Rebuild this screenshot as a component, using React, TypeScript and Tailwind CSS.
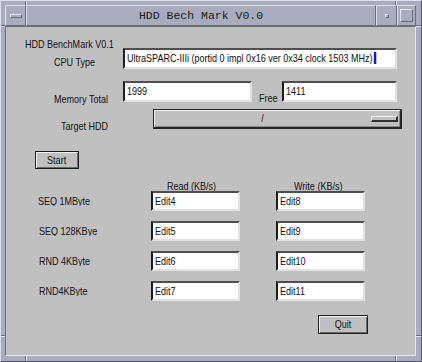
import React from "react";

const ui =
  "font-['Liberation_Sans',Arial,sans-serif] text-[11px] leading-[13px] text-[#111111]";

function N({ children, center }: { children: React.ReactNode; center?: boolean }) {
  return (
    <span
      className={`inline-block whitespace-nowrap scale-x-[0.82] ${center ? "origin-center" : "origin-left"}`}
    >
      {children}
    </span>
  );
}

function Field({ w, text, caret }: { w: string; text: string; caret?: boolean }) {
  return (
    <div
      className={`${w} shrink-0 h-full bg-white border-t-2 border-l-2 border-r-2 border-b-2 border-t-[#4e4e4e] border-l-[#1c1c1c] border-r-[#e2e2e2] border-b-[#e2e2e2] flex items-center pl-[2px] overflow-hidden`}
    >
      <N>
        {text}
        {caret && <span className="inline-block align-[-2px] w-[2.5px] h-[12px] bg-[#1818c8] ml-[2px]" />}
      </N>
    </div>
  );
}

function Btn({ label, cls }: { label: string; cls: string }) {
  return (
    <div
      className={`${cls} border border-[#1e1e1e] shadow-[inset_1px_1px_0_#f2f2f2,inset_-1px_-1px_0_#6a6a6a] flex items-center justify-center`}
    >
      <N center>{label}</N>
    </div>
  );
}

function Mark({ cls }: { cls: string }) {
  return <div className={`absolute ${cls}`} />;
}

export default function App() {
  return (
    <div className="relative w-[422px] h-[362px] bg-[#a9acbf] border border-t-[#dcdee8] border-l-[#dcdee8] border-r-[#55586b] border-b-[#55586b] pl-[4px] pr-[5px] pt-[4px] pb-[5px] flex flex-col">
      {/* title bar */}
      <div className="h-[21px] flex shrink-0">
        <div className="w-[21px] border border-t-[#dcdee8] border-l-[#dcdee8] border-r-[#6b6e82] border-b-[#6b6e82] flex items-center justify-center">
          <div className="w-[12px] h-[4px] border border-t-[#e6e7ef] border-l-[#e6e7ef] border-r-[#6b6e82] border-b-[#6b6e82]" />
        </div>
        <div className="flex-1 border border-t-[#dcdee8] border-l-[#dcdee8] border-r-[#6b6e82] border-b-[#6b6e82] flex items-center justify-center font-['Liberation_Mono',monospace] text-[11.5px] text-[#1a1a1a]">
          HDD Bech Mark V0.0
        </div>
        <div className="w-[21px] border border-t-[#dcdee8] border-l-[#dcdee8] border-r-[#6b6e82] border-b-[#6b6e82] flex items-center justify-center">
          <div className="w-[4px] h-[4px] border border-t-[#e6e7ef] border-l-[#e6e7ef] border-r-[#6b6e82] border-b-[#6b6e82]" />
        </div>
        <div className="w-[19px] border border-t-[#dcdee8] border-l-[#dcdee8] border-r-[#6b6e82] border-b-[#6b6e82] flex items-center justify-center">
          <div className="w-[13px] h-[13px] border border-t-[#e6e7ef] border-l-[#e6e7ef] border-r-[#6b6e82] border-b-[#6b6e82]" />
        </div>
      </div>

      {/* content */}
      <div className={`h-[330px] shrink-0 bg-[#c0c0c0] border border-t-[#6b6e80] border-l-[#6b6e80] border-r-[#e6e7ee] border-b-[#e6e7ee] flex flex-col ${ui}`}>
        <div className="mt-[11px] h-[10px] pl-[19px]">
          <N>HDD BenchMark V0.1</N>
        </div>

        <div className="h-[21px] flex">
          <div className="w-[117px] shrink-0 pl-[48px] pt-[8px]"><N>CPU Type</N></div>
          <Field w="w-[274px]" text="UltraSPARC-IIIi (portid 0 impl 0x16 ver 0x34 clock 1503 MHz)" caret />
        </div>

        <div className="mt-[12px] h-[21px] flex">
          <div className="w-[117px] shrink-0 pl-[48px] pt-[12px]"><N>Memory Total</N></div>
          <Field w="w-[129px]" text="1999" />
          <div className="w-[30px] shrink-0 pl-[7px] pt-[11px]"><N>Free</N></div>
          <Field w="w-[115px]" text="1411" />
        </div>

        <div className="mt-[7px] h-[20px] flex">
          <div className="w-[147px] shrink-0 pl-[55px] pt-[11px]"><N>Target HDD</N></div>
          <div className="w-[249px] shrink-0 h-full border border-[#262626] border-r-2 border-b-2 shadow-[inset_1px_1px_0_#f2f2f2,inset_-1px_-1px_0_#8a8a8a] flex items-center">
            <div className="flex-1 text-center"><N center>/</N></div>
            <div className="w-[27px] h-[6px] mr-[2px] border border-t-[#f4f4f4] border-l-[#f4f4f4] border-r-[#303030] border-b-[#303030] border-r-2 border-b-2" />
          </div>
        </div>

        <div className="mt-[22px] ml-[29px]">
          <Btn label="Start" cls="w-[44px] h-[18px]" />
        </div>

        <div className="mt-[11px] h-[11px] overflow-hidden flex pl-[161px]">
          <div className="w-[127px] shrink-0"><N>Read (KB/s)</N></div>
          <div><N>Write (KB/s)</N></div>
        </div>

        {[
          ["SEQ 1MByte", "Edit4", "Edit8", "pl-[32px]", ""],
          ["SEQ 128KBye", "Edit5", "Edit9", "pl-[33px]", "mt-[10px]"],
          ["RND 4KByte", "Edit6", "Edit10", "pl-[33px]", "mt-[10px]"],
          ["RND4KByte", "Edit7", "Edit11", "pl-[33px]", "mt-[10px]"],
        ].map(([label, a, b, pl, mt]) => (
          <div key={a} className={`${mt} h-[20px] flex`}>
            <div className={`w-[145px] shrink-0 ${pl} pt-[4px]`}>
              <div className="h-[11px] leading-[12px] overflow-hidden"><N>{label}</N></div>
            </div>
            <Field w="w-[89px]" text={a} />
            <div className="w-[36px] shrink-0" />
            <Field w="w-[89px]" text={b} />
          </div>
        ))}

        <div className="mt-[14px] ml-[312px]">
          <Btn label="Quit" cls="w-[50px] h-[19px]" />
        </div>
      </div>

      {/* frame resize marks */}
      <Mark cls="left-[24px] top-0 w-[1px] h-[4px] bg-[#6b6e82]" />
      <Mark cls="left-[25px] top-0 w-[1px] h-[4px] bg-[#e6e7ef]" />
      <Mark cls="left-[394px] top-0 w-[1px] h-[4px] bg-[#6b6e82]" />
      <Mark cls="left-[395px] top-0 w-[1px] h-[4px] bg-[#e6e7ef]" />
      <Mark cls="left-[24px] bottom-0 w-[1px] h-[5px] bg-[#6b6e82]" />
      <Mark cls="left-[25px] bottom-0 w-[1px] h-[5px] bg-[#e6e7ef]" />
      <Mark cls="left-[394px] bottom-0 w-[1px] h-[5px] bg-[#6b6e82]" />
      <Mark cls="left-[395px] bottom-0 w-[1px] h-[5px] bg-[#e6e7ef]" />
      <Mark cls="left-0 top-[24px] w-[4px] h-[1px] bg-[#6b6e82]" />
      <Mark cls="left-0 top-[25px] w-[4px] h-[1px] bg-[#e6e7ef]" />
      <Mark cls="left-0 top-[334px] w-[4px] h-[1px] bg-[#6b6e82]" />
      <Mark cls="left-0 top-[335px] w-[4px] h-[1px] bg-[#e6e7ef]" />
      <Mark cls="right-0 top-[24px] w-[5px] h-[1px] bg-[#6b6e82]" />
      <Mark cls="right-0 top-[25px] w-[5px] h-[1px] bg-[#e6e7ef]" />
      <Mark cls="right-0 top-[334px] w-[5px] h-[1px] bg-[#6b6e82]" />
      <Mark cls="right-0 top-[335px] w-[5px] h-[1px] bg-[#e6e7ef]" />
    </div>
  );
}
